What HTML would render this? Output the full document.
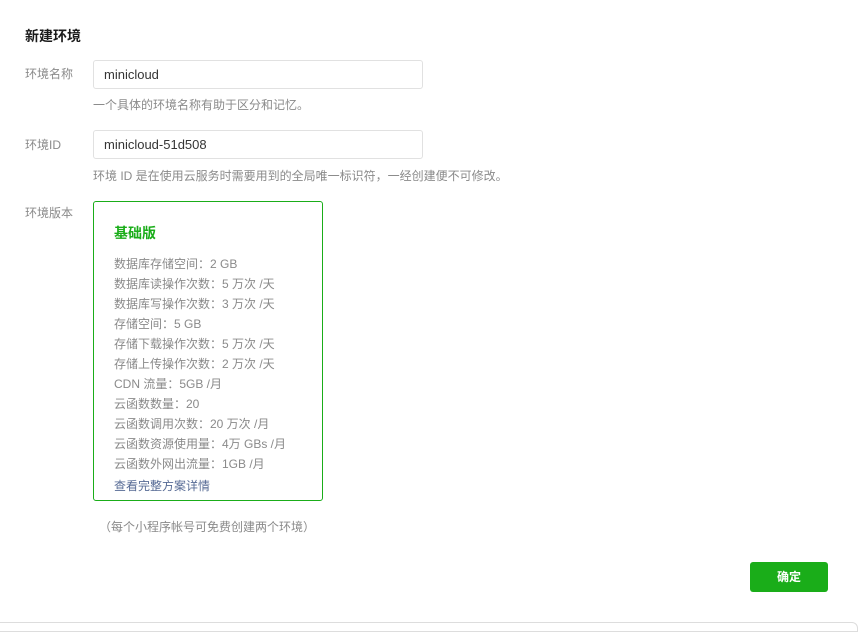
<!DOCTYPE html>
<html><head><meta charset="utf-8"><style>
*{margin:0;padding:0;box-sizing:border-box}
body{width:861px;height:625px;background:#fff;font-family:"Liberation Sans","Noto Sans CJK SC",sans-serif;position:relative;overflow:hidden;color:#353535}
.a{position:absolute;white-space:nowrap}
.lbl{font-size:12px;color:#8a8a8a;line-height:16px}
.inp{position:absolute;left:93px;width:330px;height:29px;border:1px solid #e1e1e1;border-radius:3px;font-size:13px;line-height:27px;padding-left:10px;color:#353535}
.hint{font-size:12px;color:#8a8a8a;line-height:16px}
.box{position:absolute;left:93px;top:201px;width:230px;height:300px;border:1px solid #1aad19;border-radius:3px}
.box .l{position:absolute;left:20px;font-size:12px;color:#8a8a8a;line-height:16px;white-space:nowrap}
.btn{position:absolute;left:750px;top:562px;width:78px;height:30px;background:#1aad19;border-radius:3px;color:#fff;font-size:12px;font-weight:bold;text-align:center;line-height:30px}
.bot{position:absolute;left:-2px;top:622px;width:860px;height:10px;border:1px solid #ddd;border-radius:0 6px 0 0}
</style></head><body>
<div class="a" style="left:25px;top:27px;font-size:14px;font-weight:bold;color:#1a1a1a;line-height:18px">新建环境</div>
<div class="a lbl" style="left:25px;top:66px">环境名称</div>
<div class="inp" style="top:60px">minicloud</div>
<div class="a hint" style="left:93px;top:97px">一个具体的环境名称有助于区分和记忆。</div>
<div class="a lbl" style="left:25px;top:137px">环境ID</div>
<div class="inp" style="top:130px">minicloud-51d508</div>
<div class="a hint" style="left:93px;top:168px">环境 ID 是在使用云服务时需要用到的全局唯一标识符，一经创建便不可修改。</div>
<div class="a lbl" style="left:25px;top:205px">环境版本</div>
<div class="box">
<div class="l" style="top:22px;font-size:14px;font-weight:bold;color:#1aad19;line-height:18px">基础版</div>
<div class="l" style="top:54px">数据库存储空间：2 GB</div>
<div class="l" style="top:74px">数据库读操作次数：5 万次 /天</div>
<div class="l" style="top:94px">数据库写操作次数：3 万次 /天</div>
<div class="l" style="top:114px">存储空间：5 GB</div>
<div class="l" style="top:134px">存储下载操作次数：5 万次 /天</div>
<div class="l" style="top:154px">存储上传操作次数：2 万次 /天</div>
<div class="l" style="top:174px">CDN 流量：5GB /月</div>
<div class="l" style="top:194px">云函数数量：20</div>
<div class="l" style="top:214px">云函数调用次数：20 万次 /月</div>
<div class="l" style="top:234px">云函数资源使用量：4万 GBs /月</div>
<div class="l" style="top:254px">云函数外网出流量：1GB /月</div>
<div class="l" style="top:276px;color:#576b95">查看完整方案详情</div>
</div>
<div class="a hint" style="left:99px;top:519px">（每个小程序帐号可免费创建两个环境）</div>
<div class="btn">确定</div>
<div class="bot"></div>
</body></html>
